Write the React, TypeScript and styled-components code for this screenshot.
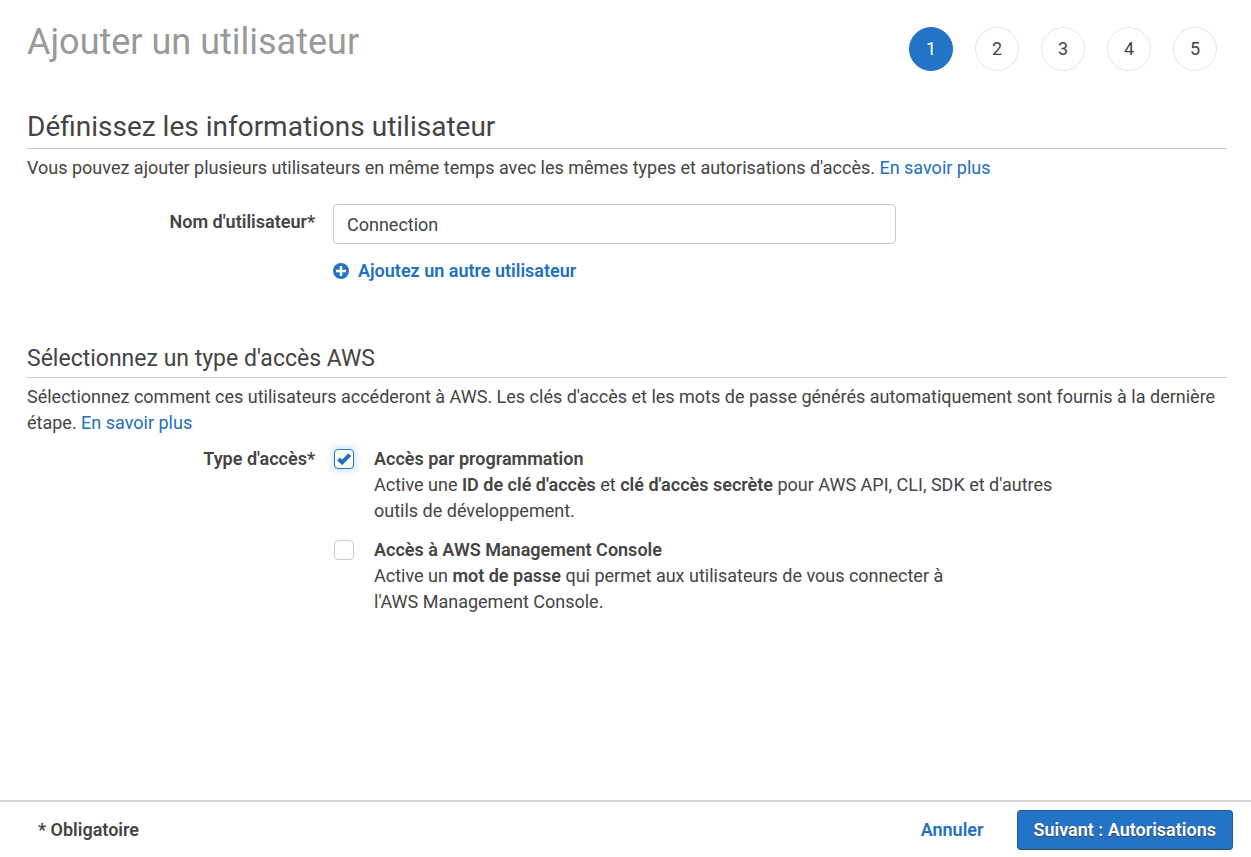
import React from "react";
import styled, { createGlobalStyle } from "styled-components";

const Global = createGlobalStyle`
  *, *::before, *::after { box-sizing: border-box; }
  body {
    margin: 0;
    background: #fff;
    color: #444;
    font: 18px/26px Roboto, "Liberation Sans", sans-serif;
  }
  strong { font-weight: 600; }
`;

const Page = styled.div`
  display: flex;
  flex-direction: column;
  min-height: 100vh;
`;

const Main = styled.main`
  flex: 1;
  padding: 20px 24px 20px 27px;
`;

const Header = styled.header`
  display: flex;
  justify-content: space-between;
  align-items: flex-start;
  padding-right: 10px;
`;

const Title = styled.h1`
  margin: 0;
  font-size: 36px;
  line-height: 44px;
  font-weight: 400;
  color: #999;
`;

const Steps = styled.ol`
  display: flex;
  gap: 22px;
  margin: 0;
  padding: 7px 0 0;
  list-style: none;
`;

const Step = styled.li<{ $active?: boolean }>`
  display: flex;
  align-items: center;
  justify-content: center;
  width: 44px;
  height: 44px;
  border: 1px solid ${(p) => (p.$active ? "#2374c6" : "#e1e7ea")};
  border-radius: 50%;
  background: ${(p) => (p.$active ? "#2374c6" : "#fff")};
  color: ${(p) => (p.$active ? "#fff" : "#444")};
`;

const Heading = styled.h2<{ $small?: boolean }>`
  margin: ${(p) => (p.$small ? "59px 0 6px" : "37px 0 6px")};
  padding-bottom: ${(p) => (p.$small ? "2px" : "3px")};
  border-bottom: 1px solid #ccc;
  font-size: ${(p) => (p.$small ? "23px" : "28px")};
  line-height: ${(p) => (p.$small ? "32px" : "37px")};
  font-weight: 400;
`;

const Text = styled.p`
  margin: 0;
`;

const Link = styled.a`
  color: #2070c0;
  text-decoration: none;
`;

const Row = styled.div`
  display: grid;
  grid-template-columns: 288px minmax(0, 563px);
  column-gap: 18px;
`;

const NameRow = styled(Row)`
  margin-top: 23px;
`;

const AccessRow = styled(Row)`
  margin-top: 10px;
  grid-template-columns: 288px minmax(0, 720px);
`;

const Label = styled.label`
  padding-top: 5px;
  text-align: right;
  font-weight: 600;
`;

const GroupLabel = styled.div`
  text-align: right;
  font-weight: 600;
`;

const Input = styled.input`
  display: block;
  width: 100%;
  height: 40px;
  padding: 0 13px;
  border: 1px solid #ccc;
  border-radius: 4px;
  color: #444;
  font: inherit;
`;

const AddButton = styled.button`
  display: flex;
  align-items: center;
  gap: 9px;
  margin-top: 14px;
  padding: 0;
  border: 0;
  background: none;
  color: #2070c0;
  font: inherit;
  font-weight: 600;
  cursor: pointer;
`;

const Options = styled.div`
  display: grid;
  row-gap: 13px;
`;

const Option = styled.label`
  display: grid;
  grid-template-columns: 22px 1fr;
  column-gap: 19px;
`;

const CheckArea = styled.span`
  display: grid;
  place-items: center;
  height: 26px;
`;

const Check = styled.input`
  grid-area: 1 / 1;
  appearance: none;
  width: 20px;
  height: 20px;
  margin: 0;
  border: 1px solid #ccc;
  border-radius: 4px;
  background: #fff;
  &:checked {
    border-color: #2374c6;
    box-shadow: 0 0 6px 3px #dbe8f0;
  }
  &:not(:checked) + svg { visibility: hidden; }
`;

const Tick = styled.svg`
  grid-area: 1 / 1;
  z-index: 1;
  pointer-events: none;
`;

const Footer = styled.footer`
  display: flex;
  align-items: center;
  height: 57px;
  padding: 0 18px 0 38px;
  border-top: 2px solid #d2d7d7;
`;

const Required = styled.strong`
  flex: 1;
`;

const Cancel = styled.button`
  padding: 0;
  border: 0;
  background: none;
  color: #2070c0;
  font: inherit;
  font-weight: 600;
  cursor: pointer;
`;

const Next = styled.button`
  height: 40px;
  margin-left: 33px;
  padding: 0 16px;
  border: 1px solid #1f5c99;
  border-bottom-color: #34495e;
  border-radius: 4px;
  background: #2374c6;
  color: #fff;
  font: inherit;
  font-weight: 600;
  text-shadow: 0 1px 1px #444;
  cursor: pointer;
`;

function AccessOption(props: { title: string; checked?: boolean; children: React.ReactNode }) {
  return (
    <Option>
      <CheckArea>
        <Check type="checkbox" defaultChecked={props.checked} />
        <Tick width="14" height="12" viewBox="0 0 14 12" aria-hidden="true">
          <path d="M1.500 6 5.200 9.400 12.800 1.600" fill="none" stroke="#2070c0" strokeWidth="4" />
        </Tick>
      </CheckArea>
      <span>
        <strong>{props.title}</strong>
        <br />
        {props.children}
      </span>
    </Option>
  );
}

export default function App() {
  return (
    <Page>
      <Global />
      <Main>
        <Header>
          <Title>Ajouter un utilisateur</Title>
          <Steps>
            {[1, 2, 3, 4, 5].map((n) => (
              <Step key={n} $active={n === 1} aria-current={n === 1 ? "step" : undefined}>
                {n}
              </Step>
            ))}
          </Steps>
        </Header>

        <Heading>Définissez les informations utilisateur</Heading>
        <Text>
          Vous pouvez ajouter plusieurs utilisateurs en même temps avec les mêmes types et autorisations d'accès.{" "}
          <Link href="#utilisateurs">En savoir plus</Link>
        </Text>
        <NameRow>
          <Label htmlFor="username">Nom d'utilisateur*</Label>
          <div>
            <Input id="username" defaultValue="Connection" />
            <AddButton type="button">
              <svg width="16" height="16" viewBox="0 0 16 16" aria-hidden="true">
                <circle cx="8" cy="8" r="8" fill="#2374c6" />
                <path d="M8 3v10M3 8h10" stroke="#fff" strokeWidth="2.400" />
              </svg>
              Ajoutez un autre utilisateur
            </AddButton>
          </div>
        </NameRow>

        <Heading $small>Sélectionnez un type d'accès AWS</Heading>
        <Text>
          Sélectionnez comment ces utilisateurs accéderont à AWS. Les clés d'accès et les mots de passe générés
          automatiquement sont fournis à la dernière
          <br />
          étape. <Link href="#acces">En savoir plus</Link>
        </Text>
        <AccessRow role="group" aria-labelledby="access-type">
          <GroupLabel id="access-type">Type d'accès*</GroupLabel>
          <Options>
            <AccessOption title="Accès par programmation" checked>
              Active une <strong>ID de clé d'accès</strong> et <strong>clé d'accès secrète</strong> pour AWS API, CLI,
              SDK et d'autres
              <br />
              outils de développement.
            </AccessOption>
            <AccessOption title="Accès à AWS Management Console">
              Active un <strong>mot de passe</strong> qui permet aux utilisateurs de vous connecter à
              <br />
              l'AWS Management Console.
            </AccessOption>
          </Options>
        </AccessRow>
      </Main>
      <Footer>
        <Required>* Obligatoire</Required>
        <Cancel type="button">Annuler</Cancel>
        <Next type="button">Suivant : Autorisations</Next>
      </Footer>
    </Page>
  );
}
